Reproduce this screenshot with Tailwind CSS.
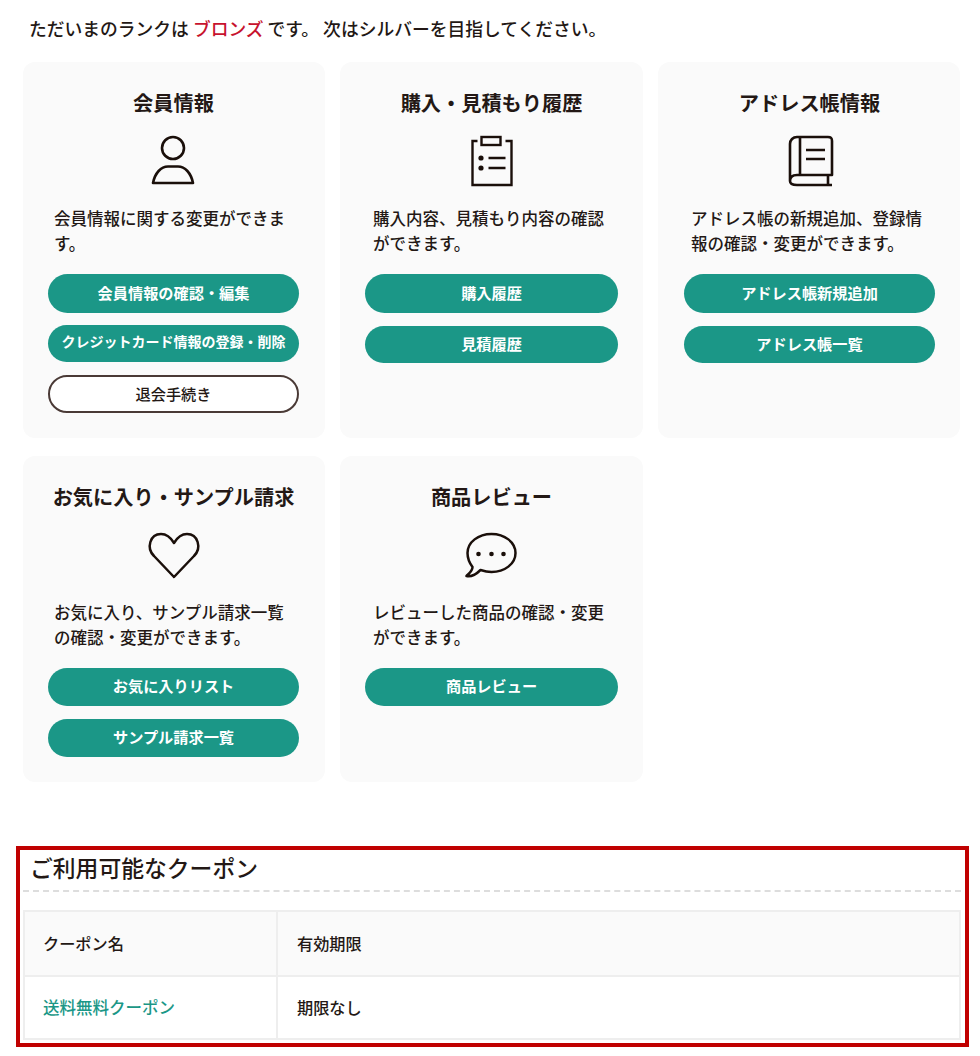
<!DOCTYPE html>
<html lang="ja">
<head>
<meta charset="utf-8">
<script src="https://cdn.jsdelivr.net/npm/@tailwindcss/browser@4"></script>
</head>
<body class="bg-white text-[#231815] font-['Noto_Sans_CJK_JP','Noto_Sans',sans-serif]">
<div class="w-[980px] h-[1056px] overflow-hidden">
  <p class="h-[62px] pl-[29px] pt-[15px] text-[17.78px] leading-[26px] font-medium">ただいまのランクは <span class="text-[#c7132e]">ブロンズ</span> です。 次はシルバーを目指してください。</p>

  <div class="ml-[23px] w-[937px] grid grid-cols-[302px_303px_302px] grid-rows-[376px_326px] gap-x-[15px] gap-y-[18px]">

    <section class="bg-[#fafafa] rounded-[12px] pl-[25px] pr-[26px] pt-[26px]">
      <h2 class="text-[20.2px] leading-[30px] font-bold text-center">会員情報</h2>
      <svg class="block mx-auto mt-[7px]" width="90" height="70" viewBox="-1 0 90 70" fill="none" stroke="#1a0f0a" stroke-width="2.6">
        <circle cx="43" cy="23" r="11"/>
        <path d="M23 58 C25 48 31 41.5 38 41.5 H48 C55 41.5 61 48 63 58 Z" stroke-linejoin="round"/>
      </svg>
      <p class="mt-[11px] px-[6px] text-[16.5px] leading-[25px] font-medium">会員情報に関する変更ができます。</p>
      <div class="mt-[18px] flex flex-col gap-[13px]">
        <a class="h-[39px] pb-[2px] rounded-full bg-[#1b9787] text-white font-bold text-[15.2px] flex items-center justify-center">会員情報の確認・編集</a>
        <a class="h-[37px] -mt-[1px] rounded-full bg-[#1b9787] text-white font-bold text-[14px] flex items-center justify-center pb-[4px]">クレジットカード情報の登録・削除</a>
        <a class="h-[38px] pb-[2px] rounded-full bg-white border-2 border-[#4a3a36] font-medium text-[15.2px] flex items-center justify-center">退会手続き</a>
      </div>
    </section>

    <section class="bg-[#fafafa] rounded-[12px] px-[25px] pt-[26px]">
      <h2 class="text-[20.2px] leading-[30px] font-bold text-center">購入・見積もり履歴</h2>
      <svg class="block mx-auto mt-[7px]" width="90" height="70" viewBox="-3.5 0 90 70" fill="none" stroke="#1a0f0a" stroke-width="2.4">
        <rect x="31" y="12" width="19" height="8"/>
        <path d="M27 16 H22 V60 H61 V16 H55"/>
        <circle cx="30.5" cy="33" r="2.6" fill="#1a0f0a" stroke="none"/>
        <circle cx="30.5" cy="43" r="2.6" fill="#1a0f0a" stroke="none"/>
        <path d="M38 33 H55 M38 43 H55"/>
      </svg>
      <p class="mt-[11px] px-[8px] text-[16.5px] leading-[25px] font-medium">購入内容、見積もり内容の確認ができます。</p>
      <div class="mt-[18px] flex flex-col gap-[13px]">
        <a class="h-[39px] pb-[2px] rounded-full bg-[#1b9787] text-white font-bold text-[15.2px] flex items-center justify-center">購入履歴</a>
        <a class="h-[37px] pb-[2px] rounded-full bg-[#1b9787] text-white font-bold text-[15.2px] flex items-center justify-center">見積履歴</a>
      </div>
    </section>

    <section class="bg-[#fafafa] rounded-[12px] pl-[26px] pr-[25px] pt-[26px]">
      <h2 class="text-[20.2px] leading-[30px] font-bold text-center">アドレス帳情報</h2>
      <svg class="block mx-auto mt-[7px]" width="90" height="70" viewBox="-6 0 90 70" fill="none" stroke="#1a0f0a" stroke-width="2.6">
        <path d="M19 56 V19 C19 15 22 12 26 12 H57 C60 12 61 13 61 16 V50 H26 C22 50 19 52 19 56 C19 59 22 60 26 60 H61" stroke-linejoin="round"/>
        <path d="M29 12 V50 M57 50 V60 M35 25 H54 M35 34 H54"/>
      </svg>
      <p class="mt-[11px] px-[7px] text-[16.5px] leading-[25px] font-medium">アドレス帳の新規追加、登録情報の確認・変更ができます。</p>
      <div class="mt-[18px] flex flex-col gap-[13px]">
        <a class="h-[39px] pb-[2px] rounded-full bg-[#1b9787] text-white font-bold text-[15.2px] flex items-center justify-center">アドレス帳新規追加</a>
        <a class="h-[37px] pb-[2px] rounded-full bg-[#1b9787] text-white font-bold text-[15.2px] flex items-center justify-center">アドレス帳一覧</a>
      </div>
    </section>

    <section class="bg-[#fafafa] rounded-[12px] pl-[25px] pr-[26px] pt-[26px]">
      <h2 class="text-[20.2px] leading-[30px] font-bold text-center">お気に入り・サンプル請求</h2>
      <svg class="block mx-auto mt-[7px]" width="90" height="70" viewBox="-1 -1 90 70" fill="none" stroke="#1a0f0a" stroke-width="2.5">
        <path d="M44 57 L24 36 C16 28 20 14 31 14 C37 14 41 18 44 23 C47 18 51 14 57 14 C68 14 72 28 64 36 Z" stroke-linejoin="round"/>
      </svg>
      <p class="mt-[11px] px-[6px] text-[16.5px] leading-[25px] font-medium">お気に入り、サンプル請求一覧の確認・変更ができます。</p>
      <div class="mt-[18px] flex flex-col gap-[13px]">
        <a class="h-[38px] pb-[3px] rounded-full bg-[#1b9787] text-white font-bold text-[15.2px] flex items-center justify-center">お気に入りリスト</a>
        <a class="h-[38px] pb-[3px] rounded-full bg-[#1b9787] text-white font-bold text-[15.2px] flex items-center justify-center">サンプル請求一覧</a>
      </div>
    </section>

    <section class="bg-[#fafafa] rounded-[12px] px-[25px] pt-[26px]">
      <h2 class="text-[20.2px] leading-[30px] font-bold text-center">商品レビュー</h2>
      <svg class="block mx-auto mt-[7px]" width="90" height="70" viewBox="-3.5 -1 90 70" fill="none" stroke="#1a0f0a" stroke-width="2.5">
        <path d="M22 47 C19 43 17 39 17 33 C17 22 28 14 41 14 C54 14 65 22 65 33 C65 44 54 52 41 52 C37 52 33 51 30 50 C26 54 21 57 16 56 C19 53 22 51 22 47 Z" stroke-linejoin="round"/>
        <circle cx="28" cy="34" r="2.3" fill="#1a0f0a" stroke="none"/>
        <circle cx="41" cy="34" r="2.3" fill="#1a0f0a" stroke="none"/>
        <circle cx="53" cy="34" r="2.3" fill="#1a0f0a" stroke="none"/>
      </svg>
      <p class="mt-[11px] px-[8px] text-[16.5px] leading-[25px] font-medium">レビューした商品の確認・変更ができます。</p>
      <div class="mt-[18px] flex flex-col gap-[13px]">
        <a class="h-[38px] pb-[3px] rounded-full bg-[#1b9787] text-white font-bold text-[15.2px] flex items-center justify-center">商品レビュー</a>
      </div>
    </section>
  </div>

  <div class="ml-[16px] mt-[64px] w-[953px] h-[201px] border-[4px] border-[#c00000] pl-[3px]">
    <h2 class="pl-[7px] h-[42px] w-[938px] border-b-2 border-dashed border-[#dddddd] text-[22.8px] leading-[36px] font-medium">ご利用可能なクーポン</h2>
    <div class="mt-[18px] w-[938px] border-2 border-[#eeeeee] h-[130px] flex flex-col text-[16.2px] font-medium">
      <div class="h-[65px] bg-[#fafafa] border-b-2 border-[#eeeeee] flex">
        <div class="w-[253px] border-r-2 border-[#eeeeee] pl-[18px] flex items-center">クーポン名</div>
        <div class="pl-[19px] flex items-center">有効期限</div>
      </div>
      <div class="flex-1 flex">
        <div class="w-[253px] border-r-2 border-[#eeeeee] pl-[18px] flex items-center text-[16.5px] text-[#1b9787]">送料無料クーポン</div>
        <div class="pl-[19px] flex items-center">期限なし</div>
      </div>
    </div>
  </div>
</div>
</body>
</html>
